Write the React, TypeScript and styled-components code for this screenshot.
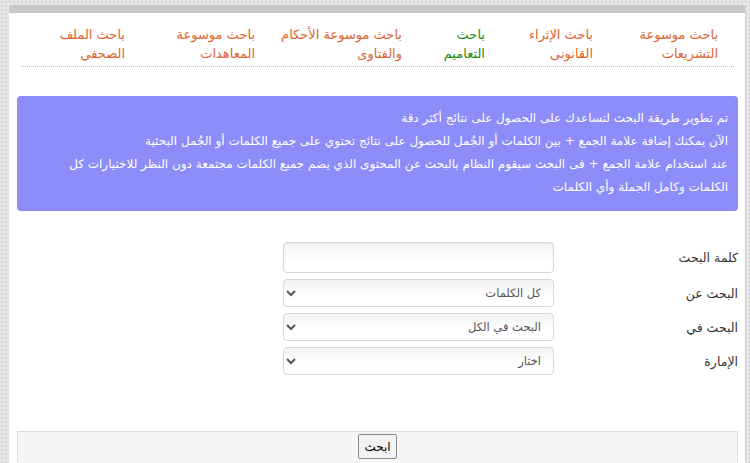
import React from "react";
import styled, { createGlobalStyle } from "styled-components";

const Global = createGlobalStyle`
  html, body { margin: 0; padding: 0; }
  body {
    background-color: #e6e6e6;
    background-image: radial-gradient(#d6d6d6 1px, transparent 1.2px);
    background-size: 4px 4px;
    font-family: "DejaVu Sans", sans-serif;
    height: 463px;
    overflow: hidden;
  }
`;

const Page = styled.div`
  padding: 5px 4px 0 9px;
`;

const Panel = styled.div`
  direction: rtl;
  background: #fff;
  border-radius: 4px 4px 0 0;
  border-top: 8px solid #c8c8c8;
  border-right: 1px solid #cfcfcf;
  padding: 0 7px 0 8px;
  height: 460px;
`;

const Nav = styled.nav`
  display: flex;
  margin: 0 4px;
  padding: 12px 16px 3px 0;
  border-bottom: 1px dotted #b8b8b8;
`;

const NavItem = styled.a<{ $w: number; $active?: boolean }>`
  display: flex;
  flex-direction: column;
  width: ${(p) => p.$w}px;
  flex: none;
  font-family: "DejaVu Sans", sans-serif;
  font-size: 13px;
  line-height: 19px;
  color: ${(p) => (p.$active ? "#1e8a1e" : "#dc6630")};
  white-space: nowrap;
  text-decoration: none;
`;

const Notice = styled.div`
  margin-top: 29px;
  background: #8d8df9;
  border-radius: 4px;
  color: #fff;
  font-family: "DejaVu Sans", sans-serif;
  font-size: 12px;
  line-height: 23px;
  padding: 11px 10px 12px 10px;
`;

const Form = styled.div`
  margin-top: 31px;
  display: grid;
  grid-template-columns: 184px 271px;
  row-gap: 6px;
`;

const Label = styled.label`
  display: flex;
  align-items: center;
  font-family: "DejaVu Sans", sans-serif;
  font-size: 12.5px;
  color: #333;
`;

const TextInput = styled.input`
  box-sizing: border-box;
  height: 31px;
  width: 271px;
  border: 1px solid #d8d8d8;
  border-radius: 4px;
  background: linear-gradient(#f2f2f2, #fff 60%);
  box-shadow: inset 0 1px 2px rgba(0, 0, 0, 0.05);
  outline: none;
`;

const Select = styled.select`
  box-sizing: border-box;
  height: 28px;
  width: 271px;
  border: 1px solid #d8d8d8;
  border-radius: 4px;
  background: linear-gradient(#f2f2f2, #fff 60%);
  font-family: "DejaVu Sans", sans-serif;
  font-size: 11.5px;
  color: #555;
  padding: 0 8px;
`;

const Footer = styled.div`
  margin-top: 56px;
  background: #f5f5f5;
  border: 1px dotted #c4c4c4;
  display: flex;
  justify-content: center;
  padding: 2px 0 8px;
`;

const Button = styled.button`
  width: 39px;
  height: 25px;
  border: 1px solid #8a8a8a;
  border-radius: 2px;
  background: #f3f3f3;
  font-family: "DejaVu Sans", sans-serif;
  font-size: 12px;
  color: #000;
  padding: 0;
`;

const navItems = [
  { w: 125, l1: "باحث موسوعة", l2: "التشريعات" },
  { w: 108, l1: "باحث الإثراء", l2: "القانونى" },
  { w: 83, l1: "باحث", l2: "التعاميم", active: true },
  { w: 147, l1: "باحث موسوعة الأحكام", l2: "والفتاوى" },
  { w: 130, l1: "باحث موسوعة", l2: "المعاهدات" },
  { w: 100, l1: "باحث الملف", l2: "الصحفي" },
];

export default function App() {
  return (
    <>
      <Global />
      <Page>
        <Panel>
          <Nav>
            {navItems.map((n, i) => (
              <NavItem key={i} $w={n.w} $active={n.active} href="#">
                <span>{n.l1}</span>
                <span>{n.l2}</span>
              </NavItem>
            ))}
          </Nav>
          <Notice>
            تم تطوير طريقة البحث لتساعدك على الحصول على نتائج أكثر دقة
            <br />
            الآن يمكنك إضافة علامة الجمع + بين الكلمات أو الجُمل للحصول على نتائج تحتوي على جميع الكلمات أو الجُمل البحثية
            <br />
            عند استخدام علامة الجمع + فى البحث سيقوم النظام بالبحث عن المحتوى الذي يضم جميع الكلمات مجتمعة دون النظر للاختيارات كل الكلمات وكامل الجملة وأي الكلمات
          </Notice>
          <Form>
            <Label>كلمة البحث</Label>
            <TextInput type="text" />
            <Label>البحث عن</Label>
            <Select defaultValue="all">
              <option value="all">كل الكلمات</option>
            </Select>
            <Label>البحث في</Label>
            <Select defaultValue="all">
              <option value="all">البحث في الكل</option>
            </Select>
            <Label>الإمارة</Label>
            <Select defaultValue="x">
              <option value="x">اختار</option>
            </Select>
          </Form>
          <Footer>
            <Button>ابحث</Button>
          </Footer>
        </Panel>
      </Page>
    </>
  );
}
